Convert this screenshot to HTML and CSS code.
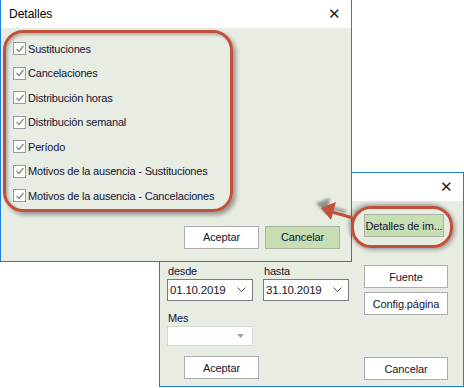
FILE: index.html
```html
<!DOCTYPE html>
<html lang="es">
<head>
    <meta charset="UTF-8">
    <title>Detalles</title>
    <link rel="stylesheet" href="styles.css">
</head>
<body>

    <!-- ventana de fondo: impresion -->
    <div class="window print-window">
        <div class="title-bar">
            <span class="title"></span>
            <span class="close">&#x2715;</span>
        </div>
        <div class="window-body print-body">
            <div class="form-col">
                <div class="date-row">
                    <div class="field">
                        <label>desde</label>
                        <div class="combo">
                            <span>01.10.2019</span>
                            <svg width="9" height="6" viewBox="0 0 9 6"><polyline points="0.5,0.5 4.5,4.5 8.5,0.5" fill="none" stroke="#555" stroke-width="1"/></svg>
                        </div>
                    </div>
                    <div class="field">
                        <label>hasta</label>
                        <div class="combo">
                            <span>31.10.2019</span>
                            <svg width="9" height="6" viewBox="0 0 9 6"><polyline points="0.5,0.5 4.5,4.5 8.5,0.5" fill="none" stroke="#555" stroke-width="1"/></svg>
                        </div>
                    </div>
                </div>
                <div class="field month">
                    <label>Mes</label>
                    <div class="combo disabled">
                        <span></span>
                        <svg width="7" height="4" viewBox="0 0 7 4"><polygon points="0,0 7,0 3.5,4" fill="#a0a0a0"/></svg>
                    </div>
                </div>
                <button class="btn btn-accept2">Aceptar</button>
            </div>
            <div class="side-col">
                <button class="btn green details-btn">Detalles de im...</button>
                <button class="btn font-btn">Fuente</button>
                <button class="btn">Config.página</button>
                <button class="btn cancel2">Cancelar</button>
            </div>
        </div>
    </div>

    <!-- ventana delante: detalles -->
    <div class="window details-window">
        <div class="title-bar">
            <span class="title">Detalles</span>
            <span class="close">&#x2715;</span>
        </div>
        <div class="window-body details-body">
            <div class="check-list">
                <div class="check-row"><span class="box"><svg width="10" height="10" viewBox="0 0 10 10"><polyline points="1.5,5 4,7.5 8.5,2" fill="none" stroke="#8a8a8a" stroke-width="1.3"/></svg></span>Sustituciones</div>
                <div class="check-row"><span class="box"><svg width="10" height="10" viewBox="0 0 10 10"><polyline points="1.5,5 4,7.5 8.5,2" fill="none" stroke="#8a8a8a" stroke-width="1.3"/></svg></span>Cancelaciones</div>
                <div class="check-row"><span class="box"><svg width="10" height="10" viewBox="0 0 10 10"><polyline points="1.5,5 4,7.5 8.5,2" fill="none" stroke="#8a8a8a" stroke-width="1.3"/></svg></span>Distribución horas</div>
                <div class="check-row"><span class="box"><svg width="10" height="10" viewBox="0 0 10 10"><polyline points="1.5,5 4,7.5 8.5,2" fill="none" stroke="#8a8a8a" stroke-width="1.3"/></svg></span>Distribución semanal</div>
                <div class="check-row"><span class="box"><svg width="10" height="10" viewBox="0 0 10 10"><polyline points="1.5,5 4,7.5 8.5,2" fill="none" stroke="#8a8a8a" stroke-width="1.3"/></svg></span>Período</div>
                <div class="check-row"><span class="box"><svg width="10" height="10" viewBox="0 0 10 10"><polyline points="1.5,5 4,7.5 8.5,2" fill="none" stroke="#8a8a8a" stroke-width="1.3"/></svg></span>Motivos de la ausencia - Sustituciones</div>
                <div class="check-row"><span class="box"><svg width="10" height="10" viewBox="0 0 10 10"><polyline points="1.5,5 4,7.5 8.5,2" fill="none" stroke="#8a8a8a" stroke-width="1.3"/></svg></span>Motivos de la ausencia - Cancelaciones</div>
            </div>
            <div class="button-row">
                <button class="btn">Aceptar</button>
                <button class="btn green">Cancelar</button>
            </div>
        </div>
    </div>

    <!-- marcas rojas -->
    <div class="mark mark-list"></div>
    <div class="mark mark-pill"></div>
    <svg class="arrow" width="464" height="388" viewBox="0 0 464 388">
        <defs>
            <filter id="soft" x="-50%" y="-50%" width="200%" height="200%">
                <feGaussianBlur stdDeviation="1.6"/>
            </filter>
        </defs>
        <g opacity="0.55" filter="url(#soft)" transform="translate(-4,-4)">
            <line x1="350" y1="216" x2="332" y2="211" stroke="#444" stroke-width="3"/>
            <polygon points="320,207 334,202 331,219" fill="#444"/>
        </g>
        <line x1="353" y1="218" x2="332" y2="212" stroke="#c2503a" stroke-width="3"/>
        <polygon points="321,208 336,202 331,220" fill="#c2503a"/>
    </svg>

</body>
</html>
```

FILE: styles.css
```css
body {
    margin: 0;
    padding: 0;
    width: 464px;
    height: 388px;
    background-color: #fff;
    font-family: 'Liberation Sans', Arial, sans-serif;
    font-size: 11px;
    letter-spacing: -0.2px;
    color: #141432;
    position: relative;
    overflow: hidden;
}

.window {
    position: absolute;
    box-sizing: border-box;
    border: 1px solid #1c7fd5;
    background-color: #e8ede3;
    display: flex;
    flex-direction: column;
}

.details-window {
    left: 0;
    top: -1px;
    width: 352px;
    height: 263px;
    z-index: 2;
}

.print-window {
    left: 159px;
    top: 172px;
    width: 305px;
    height: 215px;
    z-index: 1;
}

.title-bar {
    height: 28px;
    background-color: #fff;
    display: flex;
    align-items: center;
    justify-content: space-between;
    padding: 0 10px 0 8px;
    flex-shrink: 0;
}

.title {
    font-size: 12px;
    letter-spacing: 0;
    color: #000;
}

.close {
    font-size: 15px;
    color: #222;
    font-family: 'DejaVu Sans', sans-serif;
    font-weight: 300;
}

.window-body {
    flex: 1;
}

/* detalles */

.details-body {
    display: flex;
    flex-direction: column;
}

.check-list {
    padding: 8.5px 0 0 12px;
}

.check-row {
    height: 24.5px;
    display: flex;
    align-items: center;
    white-space: nowrap;
}

.box {
    width: 11px;
    height: 11px;
    border: 1px solid #9a9a9a;
    background-color: #fff;
    margin-right: 2px;
    display: flex;
    align-items: center;
    justify-content: center;
}

.button-row {
    display: flex;
    justify-content: flex-end;
    gap: 6px;
    padding-right: 11px;
    margin-top: 17.5px;
}

.btn {
    width: 75px;
    height: 23px;
    box-sizing: border-box;
    border: 1px solid #adadad;
    background-color: #fff;
    font-family: 'Liberation Sans', Arial, sans-serif;
    font-size: 11px;
    letter-spacing: -0.1px;
    color: #141432;
    padding: 0;
    white-space: nowrap;
}

.btn.green {
    background-color: #c6deb2;
    border-color: #a8b4a0;
}

/* impresion */

.print-body {
    display: flex;
}

.form-col {
    padding: 63px 0 0 7px;
    width: 197px;
    display: flex;
    flex-direction: column;
}

.date-row {
    display: flex;
    gap: 10px;
}

.field label {
    display: block;
    height: 15px;
    line-height: 15px;
    padding-left: 1px;
}

.combo {
    width: 86px;
    height: 22px;
    box-sizing: border-box;
    border: 1px solid #7a7a7a;
    background-color: #fff;
    display: flex;
    align-items: center;
    justify-content: space-between;
    padding: 0 6px 0 2px;
    font-size: 11.5px;
}

.month {
    margin-top: 10px;
}

.combo.disabled {
    border-color: #d6d6d6;
    height: 20px;
    padding-right: 8px;
}

.btn-accept2 {
    margin: 10px 0 0 17px;
}

.side-col {
    padding-top: 13px;
    display: flex;
    flex-direction: column;
    gap: 4px;
}

.side-col .btn {
    width: 84px;
}

.side-col .details-btn {
    width: 80px;
}

.font-btn {
    margin-top: 24px;
}

.cancel2 {
    margin-top: 38px;
}

/* marcas */

.mark {
    position: absolute;
    border: 3px solid #c2503a;
    z-index: 3;
}

.mark-list {
    left: 3px;
    top: 30px;
    width: 224px;
    height: 176px;
    border-radius: 20px;
    box-shadow: 3px 3px 4px rgba(0, 0, 0, 0.35), inset 2px 2px 3px rgba(0, 0, 0, 0.25);
}

.mark-pill {
    left: 351px;
    top: 206px;
    width: 96px;
    height: 36px;
    border-radius: 20px;
    box-shadow: -2px -2px 4px rgba(0, 0, 0, 0.3), 2px 2px 4px rgba(0, 0, 0, 0.3);
}

.arrow {
    position: absolute;
    left: 0;
    top: 0;
    z-index: 4;
    pointer-events: none;
}
```
